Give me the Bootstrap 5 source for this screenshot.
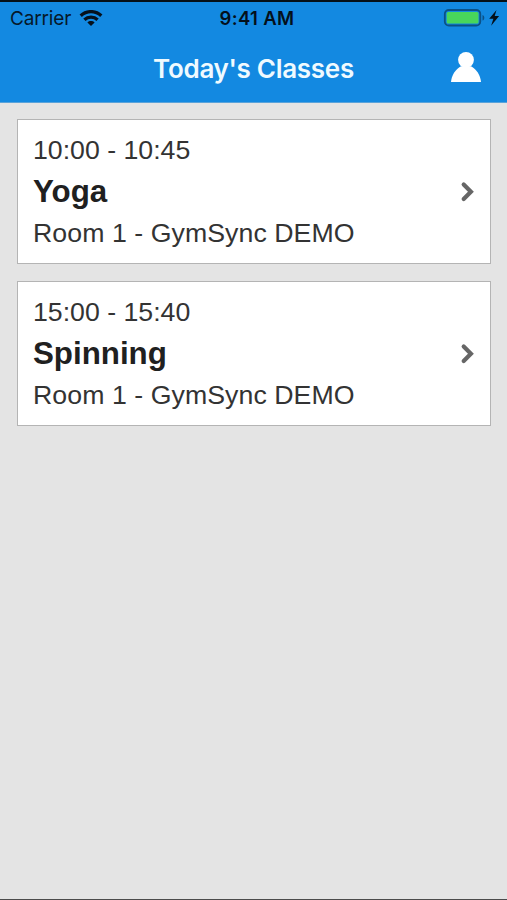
<!DOCTYPE html>
<html lang="en">
<head>
<meta charset="utf-8">
<meta name="viewport" content="width=device-width, initial-scale=1">
<title>Today's Classes</title>
<link href="https://cdn.jsdelivr.net/npm/bootstrap@5.3.0/dist/css/bootstrap.min.css" rel="stylesheet">
<style>
  body { background: #e4e4e4; font-family: "Liberation Sans", Arial, sans-serif; }
  .screen { height: 900px; border-top: 2px solid #051019; border-bottom: 1px solid #4b4b4b; }
  .app-header { background: #1389e1; height: 101px; border-bottom: 1px solid #5aa3da; font-family: Inter, sans-serif; }
  .status-bar { height: 33px; padding: 0 7px 0 10px; color: #06182a; font-size: 19px; line-height: 33px; }
  .status-bar > * { flex: 1 1 0; }
  .carrier { letter-spacing: -.15px; }
  .clock { font-weight: 600; font-size: 18.5px; letter-spacing: .35px; padding-left: 4px; color: #04101b; }
  .title-bar { height: 67px; padding: 0 25px; }
  .title-text { font-size: 26px; font-weight: 600; line-height: 66px; color: #effaff; letter-spacing: -.3px; }
  .user-icon { margin-bottom: 4px; }
  .class-list { padding: 16px 16px 0 17px; gap: 17px; }
  .class-card { height: 145px; padding: 1px 14px 0 15px; border: 1px solid #b4b4b4; border-radius: 0; color: #333; font-size: 26.7px; }
  .class-card p { line-height: 41.5px; white-space: nowrap; }
  .class-card .room { letter-spacing: .06px; }
  .class-card h2 { font-size: 31.3px; line-height: 41.5px; font-weight: 700; color: #202020; }
</style>
<script src="https://cdn.jsdelivr.net/npm/bootstrap@5.3.0/dist/js/bootstrap.bundle.min.js"></script>
</head>
<body>
<div class="screen overflow-hidden">
  <header class="app-header">
    <div class="status-bar d-flex align-items-center">
      <div class="d-flex align-items-center">
        <span class="carrier">Carrier</span>
        <svg class="ms-2" width="24" height="18" viewBox="0 0 24 18" fill="none" stroke="#06111c" stroke-width="3.3">
          <path d="M1.700 5.800C7.600.2 16.400.2 22.300 5.800"/>
          <path d="M5.400 9.700c3.700-3.400 9.500-3.400 13.200 0"/>
          <path d="M12 16.100l-3.600-3.600c2-1.900 5.200-1.900 7.200 0z" fill="#06111c" stroke="none"/>
        </svg>
      </div>
      <div class="clock text-center">9:41 AM</div>
      <div class="d-flex justify-content-end align-items-center">
        <svg width="57" height="20" viewBox="0 0 57 20">
          <rect x="1.800" y="1" width="35.500" height="15.500" rx="4" fill="#1389e1" stroke="#0b5187" stroke-width="1.800"/>
          <rect x="3.700" y="3" width="31.800" height="11.600" rx="1.500" fill="#48d65b"/>
          <path d="M39.500 6c2.400.6 2.400 5 0 5.600z" fill="#0b5187"/>
          <path d="M53.500 1l-7.300 8.800h4.200L48.100 16.800l8-9.700h-4.400z" fill="#04101b"/>
        </svg>
      </div>
    </div>
    <div class="title-bar d-flex align-items-center justify-content-between">
      <span style="width:32px"></span>
      <h1 class="title-text m-0">Today's Classes</h1>
      <svg class="user-icon" width="32" height="32" viewBox="0 0 32 32" fill="#fff">
        <circle cx="16" cy="8.800" r="7.900"/>
        <path d="M1 31c.6-7.200 4.600-12.800 10-15.800h10c5.400 3 9.400 8.600 10 15.800z"/>
      </svg>
    </div>
  </header>
  <main class="class-list d-flex flex-column">
    <div class="card class-card flex-row align-items-center justify-content-between">
      <div>
        <p class="m-0">10:00 - 10:45</p>
        <h2 class="m-0">Yoga</h2>
        <p class="room m-0">Room 1 - GymSync DEMO</p>
      </div>
      <svg width="16" height="22" viewBox="0 0 16 22" fill="none" stroke="#666" stroke-width="4.200" stroke-linecap="round"><path d="M3.700 3.500l7.200 7.200-7.200 7.200"/></svg>
    </div>
    <div class="card class-card flex-row align-items-center justify-content-between">
      <div>
        <p class="m-0">15:00 - 15:40</p>
        <h2 class="m-0">Spinning</h2>
        <p class="room m-0">Room 1 - GymSync DEMO</p>
      </div>
      <svg width="16" height="22" viewBox="0 0 16 22" fill="none" stroke="#666" stroke-width="4.200" stroke-linecap="round"><path d="M3.700 3.500l7.200 7.200-7.200 7.200"/></svg>
    </div>
  </main>
</div>
</body>
</html>
